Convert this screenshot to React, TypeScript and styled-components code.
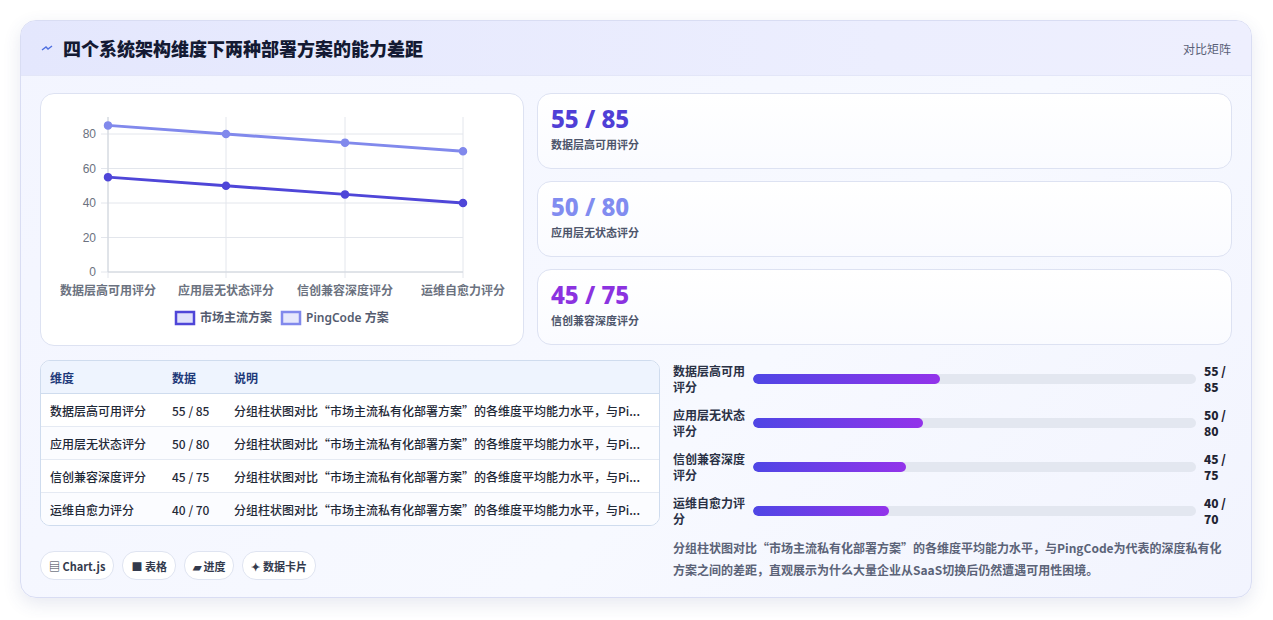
import styled, { createGlobalStyle } from "styled-components";

const Global = createGlobalStyle`
  body { margin: 0; background: #ffffff; font-family: "Noto Sans CJK SC", "Noto Sans", sans-serif; }
`;

const Page = styled.div`
  padding: 20px 20px 20px 20px;
`;

const Card = styled.div`
  width: 1232px;
  border: 1px solid #d9ddf3;
  border-radius: 16px;
  background: linear-gradient(135deg, #f3f5ff 0%, #f7f9ff 60%, #f2f4fe 100%);
  box-shadow: 0 6px 18px rgba(60, 70, 140, 0.12);
  overflow: hidden;
  box-sizing: border-box;
`;

const Header = styled.div`
  height: 54px;
  display: flex;
  align-items: center;
  justify-content: space-between;
  padding: 0 20px;
  background: linear-gradient(90deg, #e4e7fd, #eceefe 70%, #eeeffe);
  border-bottom: 1px solid #e3e6f8;
`;

const Title = styled.h1`
  margin: 0;
  font-size: 18px;
  font-weight: 900;
  color: #141a33;
  display: flex;
  align-items: center;
  gap: 10px;
`;

const Tag = styled.span`
  font-size: 12px;
  color: #5a6178;
`;

const Body = styled.div`
  padding: 17px 19px 16px 19px;
  display: grid;
  grid-template-columns: 484px 1fr;
  column-gap: 13px;
  row-gap: 14px;
`;

const Panel = styled.div`
  background: #ffffff;
  border: 1px solid #dde2f2;
  border-radius: 14px;
`;

const ChartBox = styled(Panel)`
  height: 253px;
  box-sizing: border-box;
  position: relative;
`;

const Stats = styled.div`
  display: flex;
  flex-direction: column;
  gap: 12px;
`;

const Stat = styled(Panel)`
  height: 76px;
  box-sizing: border-box;
  padding: 10px 13px;
  background: linear-gradient(180deg, #ffffff, #fafbff);
`;

const StatValue = styled.div<{ $c: string }>`
  font-size: 24px;
  font-weight: 800;
  color: ${(p) => p.$c};
  line-height: 30px;
  font-family: "Noto Sans", "Noto Sans CJK SC", sans-serif;
`;

const StatLabel = styled.div`
  font-size: 11px;
  font-weight: 600;
  color: #4d556b;
  margin-top: 2px;
`;

const LeftBottom = styled.div`
  display: flex;
  flex-direction: column;
  gap: 25px;
  margin-right: -136px;
  width: 620px;
`;

const Table = styled.table`
  width: 620px;
  border-collapse: separate;
  border-spacing: 0;
  border: 1px solid #cfdcee;
  border-radius: 10px;
  overflow: hidden;
  background: #fff;
  font-size: 12px;
  th {
    background: #eef4fe;
    color: #1e3a7a;
    text-align: left;
    font-weight: 600;
    height: 32px;
    border-bottom: 1px solid #cfdcee;
    padding: 0 9px;
  }
  td {
    height: 32px;
    padding: 0 9px;
    color: #1f2937;
    border-bottom: 1px solid #e5eaf3;
    white-space: nowrap;
    font-weight: 500;
  }
  tr:last-child td { border-bottom: none; }
  tr:nth-child(even) td { background: #fbfcff; }
`;

const Chips = styled.div`
  display: flex;
  gap: 8px;
`;

const Chip = styled.span`
  height: 27px;
  padding: 0 8px;
  border: 1px solid #dfe4f1;
  border-radius: 14px;
  background: #fff;
  display: inline-flex;
  align-items: center;
  gap: 4px;
  font-size: 11px;
  font-weight: 600;
  color: #333a4d;
`;

const RightBottom = styled.div`
  margin-left: 136px;
  margin-top: -3px;
  display: flex;
  flex-direction: column;
`;

const BarRow = styled.div`
  display: grid;
  grid-template-columns: 80px 1fr 36px;
  align-items: center;
  height: 44px;
`;

const BarLabel = styled.div`
  font-size: 12px;
  font-weight: 600;
  line-height: 16px;
  color: #2a3145;
`;

const Track = styled.div`
  height: 10px;
  border-radius: 5px;
  background: #e3e7f0;
  overflow: hidden;
`;

const Fill = styled.div`
  height: 100%;
  border-radius: 5px;
  background: linear-gradient(90deg, #4f46e5, #9333ea);
`;

const BarValue = styled.div`
  font-size: 12px;
  font-weight: 800;
  line-height: 16px;
  color: #1f2433;
  padding-left: 8px;
`;

const Note = styled.p`
  margin: 4px 0 0;
  padding-right: 8px;
  font-size: 12px;
  font-weight: 600;
  line-height: 22px;
  color: #5b6378;
`;

const dims = ["数据层高可用评分", "应用层无状态评分", "信创兼容深度评分", "运维自愈力评分"];
const market = [55, 50, 45, 40];
const ping = [85, 80, 75, 70];
const desc = "分组柱状图对比“市场主流私有化部署方案”的各维度平均能力水平，与Pi...";

const xs = [67, 185, 304, 422];
const yOf = (v: number) => 178 - v * 1.725;

function LineChart() {
  return (
    <svg width="484" height="253" style={{ display: "block" }}>
      {[0, 20, 40, 60, 80].map((v) => (
        <g key={v}>
          <line x1={60} x2={422} y1={yOf(v)} y2={yOf(v)} stroke="#e3e6ec" />
          <text x={55} y={yOf(v) + 4} fontSize="12" fill="#6b7280" textAnchor="end" fontFamily="Liberation Sans, sans-serif">{v}</text>
        </g>
      ))}
      {xs.map((x, i) => (
        <g key={x}>
          <line x1={x} x2={x} y1={23} y2={184} stroke="#e3e6ec" />
          <text x={x} y={201} fontSize="12" fill="#6b7280" textAnchor="middle" fontWeight="600">{dims[i]}</text>
        </g>
      ))}
      <line x1={67} x2={422} y1={178} y2={178} stroke="#cfd4dc" />
      <line x1={67} x2={67} y1={23} y2={178} stroke="#cfd4dc" />
      {[{ d: ping, c: "#8189ec" }, { d: market, c: "#4f46d8" }].map(({ d, c }) => (
        <g key={c}>
          <polyline points={d.map((v, i) => `${xs[i]},${yOf(v)}`).join(" ")} fill="none" stroke={c} strokeWidth="3" />
          {d.map((v, i) => (
            <circle key={i} cx={xs[i]} cy={yOf(v)} r="3.5" fill={c} stroke={c} strokeWidth="1.5" />
          ))}
        </g>
      ))}
      <rect x={135} y={218} width={18} height={12} fill="#e0e1fb" stroke="#4f46d8" strokeWidth="2.5" />
      <text x={159} y={228} fontSize="12" fill="#555c70" fontWeight="600">市场主流方案</text>
      <rect x={241} y={218} width={18} height={12} fill="#e6e8fc" stroke="#8189ec" strokeWidth="2.5" />
      <text x={265} y={228} fontSize="12" fill="#555c70" fontWeight="600" fontFamily="Noto Sans, Noto Sans CJK SC, sans-serif">PingCode 方案</text>
    </svg>
  );
}

export default function App() {
  const stats = [
    { v: "55 / 85", l: "数据层高可用评分", c: "#4f3fd6" },
    { v: "50 / 80", l: "应用层无状态评分", c: "#818cf0" },
    { v: "45 / 75", l: "信创兼容深度评分", c: "#8b32e0" },
  ];
  return (
    <Page>
      <Global />
      <Card>
        <Header>
          <Title>
            <svg width="12" height="10" viewBox="0 0 12 10">
              <path d="M1 7 L5 4 L7 6 L11 3" fill="none" stroke="#4f6fe0" strokeWidth="1.4" />
            </svg>
            四个系统架构维度下两种部署方案的能力差距
          </Title>
          <Tag>对比矩阵</Tag>
        </Header>
        <Body>
          <ChartBox>
            <LineChart />
          </ChartBox>
          <Stats>
            {stats.map((s) => (
              <Stat key={s.l}>
                <StatValue $c={s.c}>{s.v}</StatValue>
                <StatLabel>{s.l}</StatLabel>
              </Stat>
            ))}
          </Stats>
          <LeftBottom>
            <Table>
              <thead>
                <tr>
                  <th style={{ width: 104 }}>维度</th>
                  <th style={{ width: 44 }}>数据</th>
                  <th>说明</th>
                </tr>
              </thead>
              <tbody>
                {dims.map((d, i) => (
                  <tr key={d}>
                    <td>{d}</td>
                    <td>{market[i]} / {ping[i]}</td>
                    <td>{desc}</td>
                  </tr>
                ))}
              </tbody>
            </Table>
            <Chips>
              <Chip>▤ Chart.js</Chip>
              <Chip>■ 表格</Chip>
              <Chip>▰ 进度</Chip>
              <Chip>✦ 数据卡片</Chip>
            </Chips>
          </LeftBottom>
          <RightBottom>
            {dims.map((d, i) => (
              <BarRow key={d}>
                <BarLabel>{d}</BarLabel>
                <Track>
                  <Fill style={{ width: `${(market[i] / 130) * 100}%` }} />
                </Track>
                <BarValue>{market[i]} / {ping[i]}</BarValue>
              </BarRow>
            ))}
            <Note>
              分组柱状图对比“市场主流私有化部署方案”的各维度平均能力水平，与PingCode为代表的深度私有化方案之间的差距，直观展示为什么大量企业从SaaS切换后仍然遭遇可用性困境。
            </Note>
          </RightBottom>
        </Body>
      </Card>
    </Page>
  );
}
